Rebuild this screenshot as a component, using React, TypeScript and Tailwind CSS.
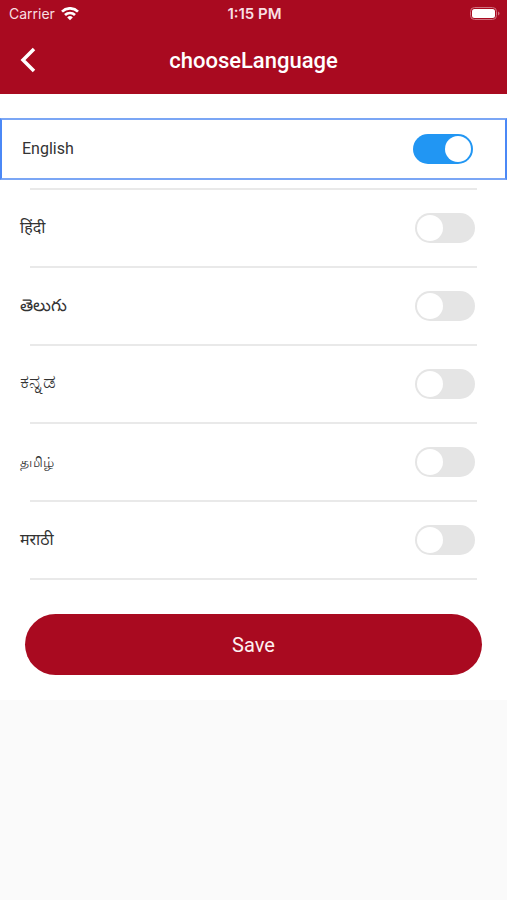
import { useState } from "react";

const languages = [
  { id: "hi", label: "हिंदी", text: "text-base" },
  { id: "te", label: "తెలుగు", text: "text-[17px]" },
  { id: "kn", label: "ಕನ್ನಡ", text: "text-xl leading-6 pb-1.5" },
  { id: "ta", label: "தமிழ்", text: "text-sm" },
  { id: "mr", label: "मराठी", text: "text-base" },
];

type ToggleProps = { id: string; checked: boolean; onChange: () => void };

function Toggle({ id, checked, onChange }: ToggleProps) {
  return (
    <input
      id={id}
      type="checkbox"
      role="switch"
      checked={checked}
      onChange={onChange}
      className="h-[30px] w-[60px] shrink-0 cursor-pointer appearance-none rounded-full bg-[#e5e5e5] p-0.5 before:block before:size-[26px] before:rounded-full before:bg-white checked:bg-[#2196f3] checked:before:ml-[30px]"
    />
  );
}

export default function App() {
  const [selected, setSelected] = useState("en");

  return (
    <div className="min-h-screen bg-[#fafafa] font-['Roboto','Noto_Sans',sans-serif] text-[#333333]">
      <header className="bg-[#a90a20] text-white">
        <div className="grid h-7 grid-cols-3 items-center pr-[7px] pl-[9px]">
          <div className="flex items-center gap-1.5 font-['Inter',sans-serif] text-sm text-[#f8dfe2]">
            <span>Carrier</span>
            <svg viewBox="0 0 18 14" className="h-3.5 w-[18px] text-white" fill="none" stroke="currentColor" strokeWidth="2.7">
              <path d="M1 4.6a11.4 11.4 0 0 1 16 0M4 8a7.2 7.2 0 0 1 10 0" />
              <path d="M6.2 10.4a4 4 0 0 1 5.6 0L9 13.2Z" fill="currentColor" stroke="none" />
            </svg>
          </div>
          <span className="text-center font-['Inter',sans-serif] text-[15px] font-semibold text-[#f8dfe2]">1:15 PM</span>
          <svg viewBox="0 0 30 14" className="h-3.5 w-[30px] justify-self-end" fill="none">
            <rect x="0.5" y="0.5" width="26" height="12" rx="4" stroke="#d0717f" />
            <rect x="2" y="2" width="23" height="9" rx="2.5" fill="white" />
            <path d="M28 4.5v4q1.5-.5 1.5-2t-1.5-2Z" fill="#d0717f" />
          </svg>
        </div>
        <div className="grid h-[66px] grid-cols-[56px_1fr_56px] items-center pb-0.5">
          <button type="button" aria-label="Back" className="flex h-12 items-center pl-5">
            <svg viewBox="0 0 16 26" className="h-[26px] w-4" fill="none" stroke="currentColor" strokeWidth="3.5">
              <path d="M14 2 3 13l11 11" />
            </svg>
          </button>
          <h1 className="text-center text-[22px] font-medium">chooseLanguage</h1>
        </div>
      </header>
      <main className="bg-white pt-6 pb-[25px]">
        <div className="flex h-[62px] items-center justify-between border-2 border-x-[#4b88f6] border-y-[#7ba6f5] pr-8 pl-5">
          <label htmlFor="en" className="text-base">English</label>
          <Toggle id="en" checked={selected === "en"} onChange={() => setSelected("en")} />
        </div>
        <div className="mx-[30px] mt-2 h-0.5 bg-[#e9e9e9]" />
        {languages.map(({ id, label, text }) => (
          <div key={id}>
            <div className="flex h-[76px] items-center justify-between pr-8 pl-5">
              <label htmlFor={id} className={text}>{label}</label>
              <Toggle id={id} checked={selected === id} onChange={() => setSelected(id)} />
            </div>
            <div className="mx-[30px] h-0.5 bg-[#e9e9e9]" />
          </div>
        ))}
        <div className="px-[25px] pt-[34px]">
          <button type="button" className="h-[61px] w-full rounded-full bg-[#a90a20] text-xl text-[#fdf0f1]">Save</button>
        </div>
      </main>
    </div>
  );
}
